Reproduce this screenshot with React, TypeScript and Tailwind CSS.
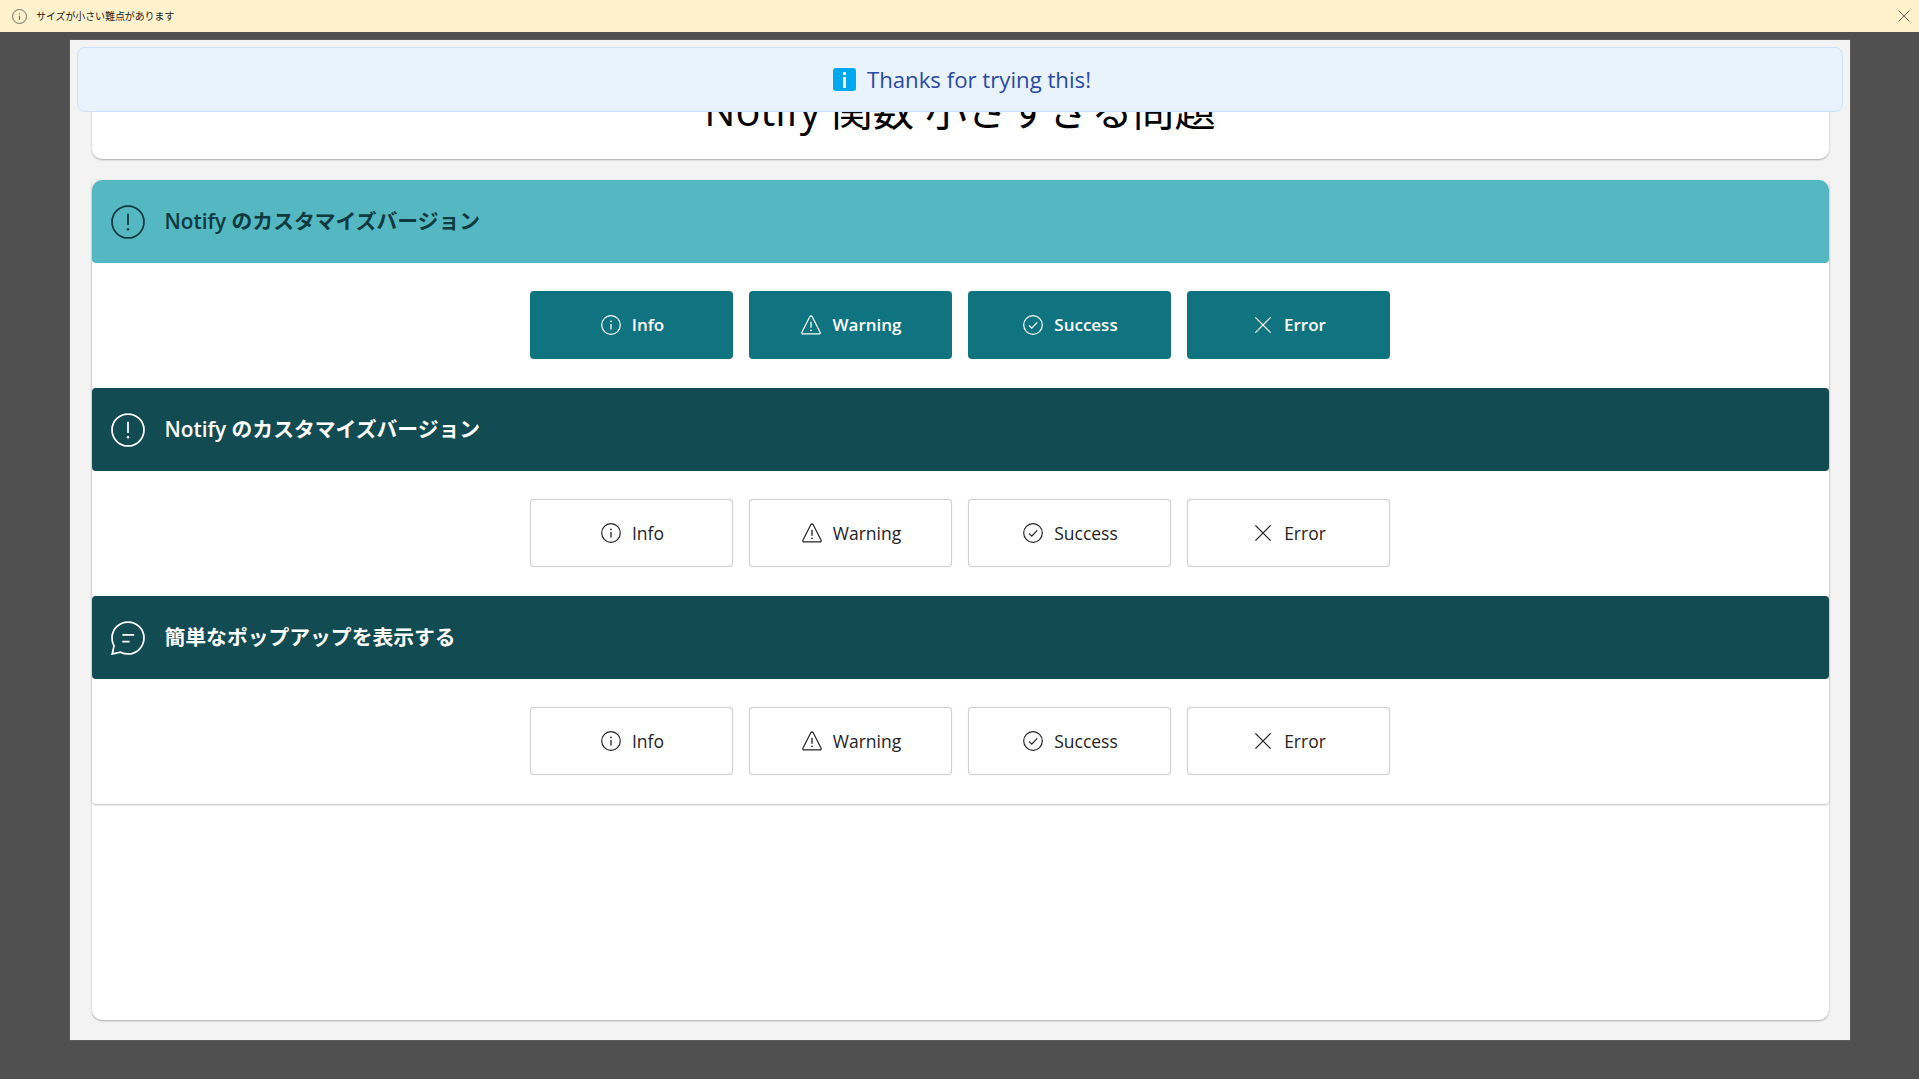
const InfoIcon = ({ className = 'w-5 h-5' }: { className?: string }) => (
  <svg viewBox="0 0 20 20" fill="none" stroke="currentColor" strokeWidth="1.200" className={className}>
    <circle cx="10" cy="10" r="9.300" />
    <path d="M10 9v5.400" strokeWidth="1.300" />
    <circle cx="10" cy="6.400" r="0.900" fill="currentColor" stroke="none" />
  </svg>
);

const WarningIcon = () => (
  <svg viewBox="0 0 20 20" fill="none" stroke="currentColor" className="w-5 h-5">
    <path d="M8.900 1.600 .9 17.200c-.4.8.1 1.700 1 1.700h16.200c.9 0 1.400-.9 1-1.700L11.100 1.600c-.5-.9-1.700-.9-2.200 0Z" strokeWidth="1.200" />
    <path d="M10 6.800v6" strokeWidth="1.300" />
    <circle cx="10" cy="15.300" r="0.900" fill="currentColor" stroke="none" />
  </svg>
);

const SuccessIcon = () => (
  <svg viewBox="0 0 20 20" fill="none" stroke="currentColor" strokeWidth="1.200" className="w-5 h-5">
    <circle cx="10" cy="10" r="9.300" />
    <path d="m6 10.400 2.800 2.700L14.200 7.400" strokeWidth="1.300" />
  </svg>
);

const ErrorIcon = () => (
  <svg viewBox="0 0 20 20" fill="none" stroke="currentColor" strokeWidth="1.300" className="w-5 h-5">
    <path d="M2.400 2.400 17.600 17.600M17.600 2.400 2.400 17.600" />
  </svg>
);

const AlertIcon = () => (
  <svg viewBox="0 0 33 33" fill="none" stroke="currentColor" className="w-[34px] h-[34px]">
    <circle cx="16.500" cy="16.500" r="15.500" strokeWidth="1.700" />
    <path d="M16.500 8.500v11" strokeWidth="1.700" />
    <circle cx="16.500" cy="23.500" r="1.200" fill="currentColor" stroke="none" />
  </svg>
);

const ChatIcon = () => (
  <svg viewBox="0 0 33 33" fill="none" stroke="currentColor" strokeWidth="1.700" className="w-[34px] h-[34px]">
    <path d="M16.500 1C25 1 32 8 32 16.500S25 32 16.500 32c-2.500 0-5-.6-7.100-1.700L1.200 32l1.700-7.800C1.700 22 1 19.400 1 16.500 1 8 8 1 16.500 1Z" />
    <path d="M11 13.500h11.500M11 20h7" />
  </svg>
);

const buttons = [
  { label: 'Info', icon: <InfoIcon /> },
  { label: 'Warning', icon: <WarningIcon /> },
  { label: 'Success', icon: <SuccessIcon /> },
  { label: 'Error', icon: <ErrorIcon /> },
];

const ActionButton = ({ label, icon, filled }: { label: string; icon: JSX.Element; filled?: boolean }) => (
  <button
    className={
      filled
        ? 'w-[203px] h-[68px] pl-[2px] flex items-center justify-center gap-[11px] rounded-[4px] bg-[#0f747f] text-white font-semibold text-[17px]'
        : 'w-[203px] h-[68px] pl-[2px] flex items-center justify-center gap-[11px] rounded-[4px] bg-white border border-[#d1d1d1] shadow-[0_0_1px_#c8c8c8] text-[#242424] font-medium text-[17.500px]'
    }
  >
    {icon}
    <span>{label}</span>
  </button>
);

const Section = ({
  title,
  icon,
  headerClass,
  filled,
}: {
  title: string;
  icon: JSX.Element;
  headerClass: string;
  filled?: boolean;
}) => (
  <section>
    <div className={'h-[83px] flex items-center pl-[19px] gap-[20px] ' + headerClass}>
      {icon}
      <h2 className="text-[20.800px] font-semibold">{title}</h2>
    </div>
    <div className="h-[125px] flex items-center justify-center gap-4 pb-px">
      {buttons.map((b) => (
        <ActionButton key={b.label} label={b.label} icon={b.icon} filled={filled} />
      ))}
    </div>
  </section>
);

export default function App() {
  return (
    <div className="w-[1919px] h-[1079px] overflow-hidden bg-[#505050] font-['Open_Sans','Noto_Sans_CJK_JP',sans-serif]">
      <div className="h-8 bg-[#fff1cc] flex items-center pl-[12px] pr-[9px] text-[#424242]">
        <InfoIcon className="w-[15px] h-[15px] text-[#616161]" />
        <span className="ml-[9px] text-[10px] tracking-[-0.010em] text-[#242424]">サイズが小さい難点があります</span>
        <svg viewBox="0 0 12 12" fill="none" stroke="#616161" strokeWidth="1" className="w-3 h-3 ml-auto">
          <path d="M.5.500l11 11M11.500.500l-11 11" />
        </svg>
      </div>
      <div className="relative mt-2 ml-[70px] w-[1780px] h-[1000px] bg-[#f3f3f3] shadow-[0_0_1px_#999] px-[21.500px] pt-5 pb-[20.500px] flex flex-col gap-[21px]">
        <div className="absolute left-[7px] right-[7px] top-[7px] h-[65px] pl-[4px] flex items-center justify-center gap-[11px] rounded-[8px] bg-[#e9f3fe] border border-[#cde0fb] text-[#2a4aa5]">
          <span className="w-[23px] h-[23px] rounded-[3px] bg-[#00a8f0] flex flex-col items-center justify-center gap-[2px]">
            <span className="w-[3px] h-[3px] bg-white" />
            <span className="w-[3px] h-[11px] bg-white" />
          </span>
          <span className="text-[22.200px]">Thanks for trying this!</span>
        </div>
        <div className="h-[99px] shrink-0 bg-white rounded-[10px] shadow-[0_1px_2px_rgba(0,0,0,0.3)] flex items-end justify-center pb-[23px]">
          <h1 className="text-[41.500px] leading-[52px] text-black">Notify 関数 小さすぎる問題</h1>
        </div>
        <div className="flex-1 bg-white rounded-[10px] shadow-[0_1px_2px_rgba(0,0,0,0.3)]">
          <div className="rounded-b-[4px] shadow-[0_1px_2px_rgba(0,0,0,0.25)]">
            <Section
              title="Notify のカスタマイズバージョン"
              icon={<AlertIcon />}
              headerClass="rounded-t-[10px] rounded-b-[4px] bg-[#54b7c1] text-[#0e3a40]"
              filled
            />
            <Section
              title="Notify のカスタマイズバージョン"
              icon={<AlertIcon />}
              headerClass="rounded-[4px] bg-[#124c52] text-white"
            />
            <Section
              title="簡単なポップアップを表示する"
              icon={<ChatIcon />}
              headerClass="rounded-[4px] bg-[#124c52] text-white"
            />
          </div>
        </div>
      </div>
    </div>
  );
}
